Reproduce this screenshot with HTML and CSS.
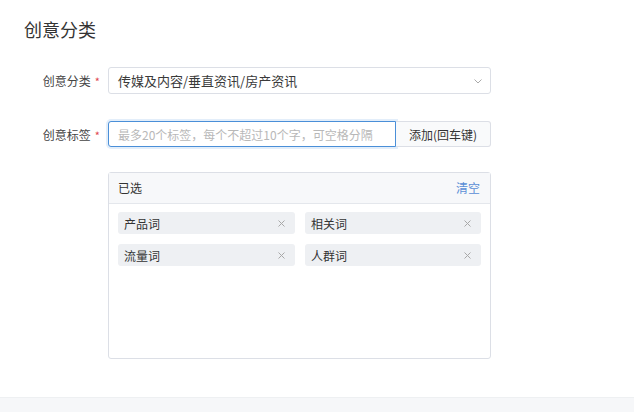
FILE: index.html
```html
<!DOCTYPE html>
<html lang="zh">
<head>
<meta charset="utf-8">
<link rel="stylesheet" href="styles.css">
</head>
<body>
<div class="page">
  <h1 class="title">创意分类</h1>
  <div class="form">
    <div class="row">
      <label class="label">创意分类<span class="req">*</span></label>
      <div class="select">
        <span class="select-text">传媒及内容/垂直资讯/房产资讯</span>
        <svg class="chev" width="8" height="5" viewBox="0 0 8 5"><path d="M0.5 0.5 L4 4 L7.5 0.5" fill="none" stroke="#aaa" stroke-width="1"/></svg>
      </div>
    </div>
    <div class="row">
      <label class="label">创意标签<span class="req">*</span></label>
      <div class="input-group">
        <input class="input" type="text" placeholder="最多20个标签，每个不超过10个字，可空格分隔">
        <button class="btn">添加(回车键)</button>
      </div>
    </div>
    <div class="row row-top">
      <div class="label"></div>
      <div class="box">
        <div class="box-head">
          <span>已选</span>
          <a class="clear">清空</a>
        </div>
        <div class="tags">
          <div class="tag"><span>产品词</span><svg class="x" width="7" height="7" viewBox="0 0 7 7"><path d="M0.5 0.5 L6.5 6.5 M6.5 0.5 L0.5 6.5" stroke="#a8a8a8" stroke-width="1"/></svg></div>
          <div class="tag"><span>相关词</span><svg class="x" width="7" height="7" viewBox="0 0 7 7"><path d="M0.5 0.5 L6.5 6.5 M6.5 0.5 L0.5 6.5" stroke="#a8a8a8" stroke-width="1"/></svg></div>
          <div class="tag"><span>流量词</span><svg class="x" width="7" height="7" viewBox="0 0 7 7"><path d="M0.5 0.5 L6.5 6.5 M6.5 0.5 L0.5 6.5" stroke="#a8a8a8" stroke-width="1"/></svg></div>
          <div class="tag"><span>人群词</span><svg class="x" width="7" height="7" viewBox="0 0 7 7"><path d="M0.5 0.5 L6.5 6.5 M6.5 0.5 L0.5 6.5" stroke="#a8a8a8" stroke-width="1"/></svg></div>
        </div>
      </div>
    </div>
  </div>
</div>
<div class="footer"></div>
</body>
</html>
```
FILE: styles.css
```css
html, body {
  margin: 0;
  padding: 0;
  background: #fff;
  font-family: "Noto Sans CJK SC", "Microsoft YaHei", sans-serif;
  color: #333;
}
.page {
  height: 397px;
  padding: 0 0 0 24px;
  box-sizing: border-box;
  overflow: hidden;
}
.title {
  margin: 0;
  padding-top: 17px;
  font-size: 18px;
  font-weight: normal;
  line-height: 24px;
  color: #333;
}
.form {
  margin-top: 26px;
  display: flex;
  flex-direction: column;
  gap: 27px;
}
.row {
  display: flex;
  align-items: center;
}
.row-top { align-items: flex-start; margin-top: -2px; }
.label {
  width: 84px;
  box-sizing: border-box;
  padding-right: 8px;
  text-align: right;
  font-size: 12px;
  color: #444;
  white-space: nowrap;
}
.req {
  color: #e0474f;
  margin-left: 4px;
  font-size: 11px;
}
.select {
  width: 383px;
  height: 27px;
  box-sizing: border-box;
  border: 1px solid #dcdfe6;
  border-radius: 3px;
  display: flex;
  align-items: center;
  justify-content: space-between;
  padding: 0 8px 0 9px;
  font-size: 13px;
  color: #3a3a3a;
}
.chev { margin-top: 1px; }
.input-group {
  display: flex;
  width: 383px;
  height: 26px;
}
.input {
  width: 288px;
  height: 26px;
  box-sizing: border-box;
  border: 1px solid #4a8fd8;
  border-radius: 3px 0 0 3px;
  box-shadow: 0 0 0 2px #e3eefa;
  padding: 0 9px;
  font-family: inherit;
  font-size: 12px;
  color: #333;
  outline: none;
}
.input::placeholder { color: #b8b8b8; }
.btn {
  width: 95px;
  height: 26px;
  box-sizing: border-box;
  border: 1px solid #dcdfe6;
  border-left: none;
  border-radius: 0 3px 3px 0;
  background: #f9fafb;
  font-family: inherit;
  font-size: 12px;
  color: #333;
  padding: 0;
}
.box {
  width: 383px;
  height: 187px;
  box-sizing: border-box;
  border: 1px solid #dcdfe6;
  border-radius: 3px;
}
.box-head {
  height: 31px;
  box-sizing: border-box;
  background: #f7f8fa;
  border-bottom: 1px solid #e4e7ec;
  display: flex;
  align-items: center;
  justify-content: space-between;
  padding: 0 10px 1px 9px;
  font-size: 12px;
}
.clear { color: #5a8ed6; cursor: pointer; }
.tags {
  display: grid;
  grid-template-columns: 177px 176px;
  column-gap: 10px;
  row-gap: 10px;
  padding: 8px 9px 0 9px;
}
.tag {
  height: 22px;
  background: #eef0f3;
  border-radius: 3px;
  display: flex;
  align-items: center;
  justify-content: space-between;
  padding: 0 10px 0 6px;
  font-size: 12px;
  color: #333;
}
.x { display: block; }
.footer {
  height: 15px;
  background: #f6f7f9;
  border-top: 1px solid #eef0f2;
}
```
